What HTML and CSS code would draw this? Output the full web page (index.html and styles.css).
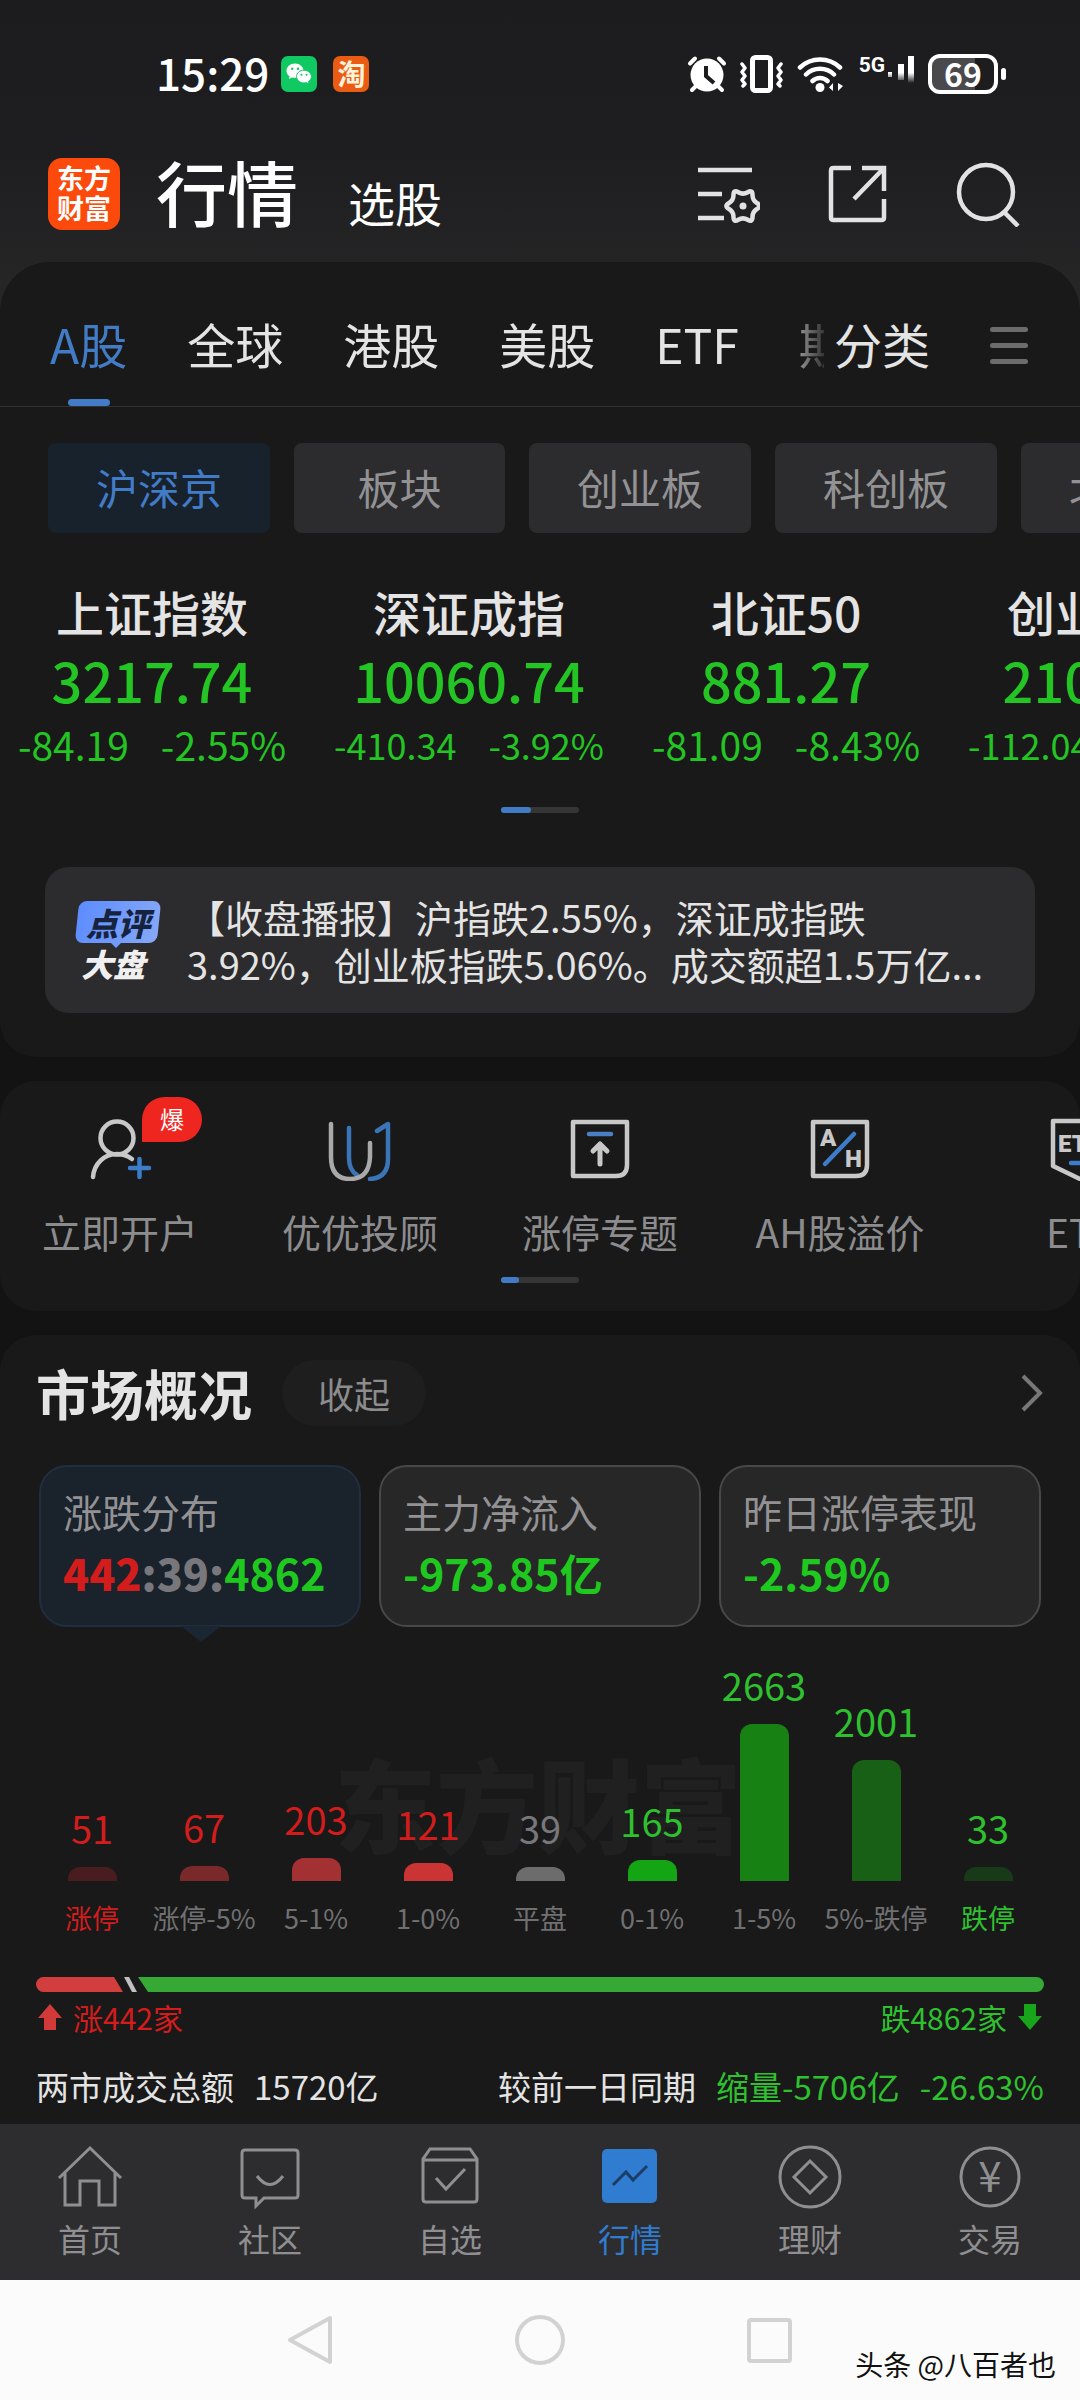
FILE: index.html
```
<!DOCTYPE html>
<html lang="zh-CN">
<head>
  <meta charset="UTF-8" />
  <meta name="viewport" content="width=device-width, initial-scale=1.0" />
  <title>行情</title>
  <link rel="stylesheet" href="styles.css">
</head>
<body>

<div class="top">
  <div class="status">
    <span class="time">15:29</span>
    <svg class="app-icon" width="36" height="36" viewBox="0 0 36 36">
      <rect width="36" height="36" rx="7" fill="#10c963"/>
      <path d="M14 7.500C9.300 7.500 5.500 10.700 5.500 14.700c0 2.300 1.200 4.200 3.100 5.500l-.8 2.900 3.200-1.700c1 .3 2 .4 3 .4 4.700 0 8.500-3.200 8.500-7.100S18.700 7.500 14 7.500z" fill="#fff"/>
      <path d="M23 14.200c-4.200 0-7.500 2.900-7.500 6.400s3.300 6.400 7.500 6.400c.9 0 1.700-.1 2.500-.4l2.700 1.500-.7-2.500c1.800-1.200 2.900-3 2.900-5 0-3.500-3.200-6.400-7.400-6.400z" fill="#fff" stroke="#10c963"/>
      <g fill="#10c963"><circle cx="11.200" cy="12.700" r="1.200"/><circle cx="17" cy="12.700" r="1.200"/><circle cx="20.500" cy="18.800" r="1"/><circle cx="25.500" cy="18.800" r="1"/></g>
    </svg>
    <span class="taobao">淘</span>
    <svg class="push" width="40" height="38" viewBox="0 0 40 38">
      <g stroke="#fff" stroke-width="4" stroke-linecap="round" fill="none"><path d="M3 8.500 8 3.500M37 8.500l-5-5M9 31l-4 4M31 31l4 4"/></g>
      <circle cx="20" cy="20" r="16.500" fill="#fff"/>
      <path d="M19 11v10l8 7" fill="none" stroke="#1d1d1f" stroke-width="4"/>
    </svg>
    <svg width="46" height="38" viewBox="0 0 46 38" fill="none" stroke="#fff" stroke-linejoin="round" stroke-linecap="round">
      <rect x="13.500" y="2.500" width="18" height="33" rx="3" stroke-width="5"/>
      <path d="m3 9 3 4-3 4 3 4-3 4 3 4-2 2M42 9l-3 4 3 4-3 4 3 4-3 4 2 2" stroke-width="3.500"/>
    </svg>
    <svg width="48" height="38" viewBox="0 0 48 38" fill="none" stroke="#fff" stroke-width="4.500" stroke-linecap="round">
      <path d="M3 12.500a29 29 0 0 1 40 0M9 19.500a20 20 0 0 1 28 0M15.500 26a11 11 0 0 1 15 0"/>
      <circle cx="23" cy="32.500" r="4.500" fill="#fff" stroke="none"/>
      <path d="M36 28v8l-4-3.500zM41 28v8l5-5z" fill="#fff" stroke="none"/>
    </svg>
    <span class="net">
      <b>5G</b>
      <svg width="27" height="30" viewBox="0 0 27 30">
        <defs><linearGradient id="fade" x1="0" y1="0" x2="0" y2="1"><stop offset=".62" stop-color="#fff"/><stop offset="1" stop-color="#fff" stop-opacity="0"/></linearGradient></defs>
        <path d="M1 17h4v5H1zM11 9h6v16h-6zM21 1h6v27h-6z" fill="url(#fade)"/>
      </svg>
    </span>
    <span class="battery">69</span>
  </div>

  <header class="header">
    <a class="logo" href="#">东方<br>财富</a>
    <h1>行情</h1>
    <a class="pick" href="#">选股</a>
    <button class="tool first" aria-label="设置">
      <svg width="62" height="62" viewBox="0 0 62 62" fill="none" stroke="#e2e2e4" stroke-width="4.500">
        <path d="M0 7h54M0 31h24M0 55h26"/>
        <path d="M59.250 45.750Q64 43 59.250 40.250 54.500 37.500 54.500 32 54.500 26.500 49.750 29.250 45 32 40.250 29.250 35.500 26.500 35.500 32 35.500 37.500 30.750 40.250 26 43 30.750 45.750 35.500 48.500 35.500 54 35.500 59.500 40.250 56.750 45 54 49.750 56.750 54.500 59.500 54.500 54 54.500 48.500 59.250 45.750z"/>
        <circle cx="45" cy="43" r="3.500" fill="#e2e2e4" stroke="none"/>
      </svg>
    </button>
    <button class="tool" aria-label="分享">
      <svg width="60" height="62" viewBox="0 0 60 62" fill="none" stroke="#e2e2e4" stroke-width="4.500">
        <path d="M23 5H5.500q-2.500 0-2.500 2.500v47q0 2.500 2.500 2.500h48q2.500 0 2.500-2.500V36M34 5h22v23M56 5 26 36"/>
      </svg>
    </button>
    <button class="tool" aria-label="搜索">
      <svg width="64" height="66" viewBox="0 0 64 66" fill="none" stroke="#e2e2e4" stroke-width="4.500">
        <circle cx="30" cy="31" r="27"/><path d="m48 51 14 14"/>
      </svg>
    </button>
  </header>
</div>

<main>
  <section class="panel market">
    <nav class="tabs">
      <div class="tab-list">
        <a class="active" href="#">A股</a>
        <a href="#">全球</a>
        <a href="#">港股</a>
        <a href="#">美股</a>
        <a href="#">ETF</a>
        <a href="#">期货</a>
      </div>
      <a class="sort" href="#">分类</a>
      <button class="menu" aria-label="菜单"><i></i><i></i><i></i></button>
    </nav>

    <div class="chips">
      <button class="active">沪深京</button>
      <button class="short">板块</button>
      <button>创业板</button>
      <button>科创板</button>
      <button>北交所</button>
    </div>

    <div class="indices">
      <div class="index"><h2>上证指数</h2><strong>3217.74</strong><p><span>-84.19</span><span>-2.55%</span></p></div>
      <div class="index"><h2>深证成指</h2><strong>10060.74</strong><p class="small"><span>-410.34</span><span>-3.92%</span></p></div>
      <div class="index"><h2>北证50</h2><strong>881.27</strong><p><span>-81.09</span><span>-8.43%</span></p></div>
      <div class="index"><h2>创业板指</h2><strong>2104.09</strong><p class="small"><span>-112.04</span><span>-5.06%</span></p></div>
    </div>
    <div class="pager"><i></i></div>

    <a class="news" href="#">
      <span class="news-tag"><b>点评</b><em>大盘</em></span>
      <span class="news-text">【收盘播报】沪指跌2.55%，深证成指跌3.92%，创业板指跌5.06%。成交额超1.5万亿...</span>
    </a>
  </section>

  <section class="panel tools">
    <div class="shortcuts">
      <a href="#">
        <svg width="64" height="64" viewBox="0 0 64 64" fill="none" stroke="#c8c8c8" stroke-width="4.500" stroke-linecap="round">
          <circle cx="29" cy="21" r="16.500"/><path d="M5 60c1-13 11-23 24-23 6 0 11 2 15 5"/><path d="M42 51h19M51.500 42v18" stroke="#3d7cc9"/>
        </svg>
        <span>立即开户</span>
        <b class="hot">爆</b>
      </a>
      <a href="#">
        <svg width="64" height="64" viewBox="0 0 64 64" fill="none" stroke-width="4.500" stroke-linecap="round" stroke-linejoin="round">
          <path d="M21 11v30q0 12 8 17" stroke="#3a75b8"/><path d="M3 7v33q0 22 19 22t20-22V26" stroke="#a9a9a9"/><path d="m49 14 11-7v35q0 19-18 20" stroke="#3a75b8"/>
        </svg>
        <span>优优投顾</span>
      </a>
      <a href="#">
        <svg width="64" height="64" viewBox="0 0 64 64" fill="none" stroke="#c8c8c8" stroke-width="4.500" stroke-linecap="round" stroke-linejoin="round">
          <path d="M5 5h54v43q0 11-11 11H5z"/><path d="M21 17h22" stroke="#4a7fc6"/><path d="M32 47V27M25 34l7-7 7 7" stroke-width="5"/>
        </svg>
        <span>涨停专题</span>
      </a>
      <a href="#">
        <svg width="64" height="64" viewBox="0 0 64 64" fill="none" stroke="#c8c8c8" stroke-width="4.500" stroke-linecap="round" stroke-linejoin="round">
          <path d="M5 5h54v43q0 11-11 11H5z"/><path d="M17 47 46 17" stroke="#3d7cc9"/>
          <text x="12" y="29" class="icon-text">A</text><text x="37" y="50" class="icon-text">H</text>
        </svg>
        <span>AH股溢价</span>
      </a>
      <a href="#">
        <svg width="64" height="64" viewBox="0 0 64 64" fill="none" stroke="#c8c8c8" stroke-width="4.500" stroke-linecap="round" stroke-linejoin="round">
          <path d="M5 4h54v45L32 62 5 49z"/><path d="M23 46h18" stroke="#3d7cc9"/>
          <text x="10" y="35" class="icon-text">ETF</text>
        </svg>
        <span>ETF</span>
      </a>
    </div>
    <div class="pager narrow"><i></i></div>
  </section>

  <section class="panel overview">
    <div class="overview-head">
      <h2>市场概况</h2>
      <button>收起</button>
      <a href="#" aria-label="更多"><svg width="24" height="38" viewBox="0 0 24 38" fill="none" stroke="#77777a" stroke-width="4"><path d="m3 2 17 17L3 36"/></svg></a>
    </div>

    <div class="cards">
      <button class="card active"><span>涨跌分布</span><strong><b class="up">442</b><b class="flat">:39:</b>4862</strong></button>
      <button class="card"><span>主力净流入</span><strong>-973.85亿</strong></button>
      <button class="card"><span>昨日涨停表现</span><strong>-2.59%</strong></button>
    </div>

    <div class="chart">
      <div class="watermark">东方财富</div>
      <div class="col up"><b>51</b><i style="height:14px;background:#491d20"></i><span>涨停</span></div>
      <div class="col up"><b>67</b><i style="height:15px;background:#79292a"></i><span class="plain">涨停-5%</span></div>
      <div class="col up"><b>203</b><i style="height:23px;background:#a33033"></i><span class="plain">5-1%</span></div>
      <div class="col up"><b>121</b><i style="height:18px;background:#cb3434"></i><span class="plain">1-0%</span></div>
      <div class="col flat"><b>39</b><i style="height:14px;background:#6c6c6c"></i><span class="plain">平盘</span></div>
      <div class="col down"><b>165</b><i style="height:21px;background:#13a513"></i><span class="plain">0-1%</span></div>
      <div class="col down"><b>2663</b><i style="height:157px;background:#178213"></i><span class="plain">1-5%</span></div>
      <div class="col down"><b>2001</b><i style="height:121px;background:#186015"></i><span class="plain">5%-跌停</span></div>
      <div class="col down"><b>33</b><i style="height:14px;background:#193a19"></i><span>跌停</span></div>
    </div>

    <div class="ratio"><i class="rise"></i><i class="even"></i><i class="fall"></i></div>
    <div class="counts">
      <span class="up"><svg width="26" height="28" viewBox="0 0 26 28"><path d="m13 1 12 14h-6v12H7V15H1z" fill="#d23a3a"/></svg>涨442家</span>
      <span class="down">跌4862家<svg width="26" height="28" viewBox="0 0 26 28"><path d="M13 27 1 13h6V1h12v12h6z" fill="#18a51c"/></svg></span>
    </div>
    <div class="turnover">
      <span>两市成交总额</span><span>15720亿</span>
      <span class="compare">较前一日同期</span><span class="down">缩量-5706亿</span><span class="down">-26.63%</span>
    </div>
  </section>
</main>

<nav class="tabbar">
  <a href="#"><svg width="66" height="66" viewBox="0 0 66 66"><path d="M2 34 33 4l31 30M8 29v32h15V37h19v24h16V29"/></svg>首页</a>
  <a href="#"><svg width="66" height="66" viewBox="0 0 66 66"><path d="M8 6h50q3 0 3 3v42q0 3-3 3H27l-8 8v-8H8q-3 0-3-3V9q0-3 3-3zM20 32q13 17 26 0"/></svg>社区</a>
  <a href="#"><svg width="66" height="66" viewBox="0 0 66 66"><path d="M13 5h40l7 10v40q0 3-3 3H9q-3 0-3-3V15zM6 16h54M19 34l10 11 19-20"/></svg>自选</a>
  <a class="active" href="#"><svg width="66" height="66" viewBox="0 0 66 66"><rect x="5" y="5" width="55" height="54" rx="5" fill="#2f7cd0" stroke="none"/><path d="m16 41 13-13 7 8 14-14" stroke="#1c3d66"/></svg>行情</a>
  <a href="#"><svg width="66" height="66" viewBox="0 0 66 66"><circle cx="33" cy="33" r="30"/><path d="m33 17 16 16-16 16-16-16z"/></svg>理财</a>
  <a href="#"><svg width="66" height="66" viewBox="0 0 66 66"><circle cx="33" cy="33" r="29"/><text x="33" y="48" class="yen">¥</text></svg>交易</a>
</nav>

<footer class="sysnav">
  <button aria-label="返回"><svg width="52" height="52" viewBox="0 0 52 52"><path d="M45 4v44L5 26z"/></svg></button>
  <button aria-label="主页"><svg width="52" height="52" viewBox="0 0 52 52"><circle cx="26" cy="26" r="23"/></svg></button>
  <button aria-label="最近任务"><svg width="52" height="52" viewBox="0 0 52 52"><rect x="6" y="6" width="41" height="41" rx="2"/></svg></button>
  <span class="credit">头条 @八百者也</span>
</footer>

</body>
</html>
```
FILE: styles.css
```
* {
  box-sizing: border-box;
}
body {
  margin: 0;
  min-height: 100vh;
  display: flex;
  flex-direction: column;
  overflow-x: hidden;
  background: #131313;
  color: #e4e4e4;
  font-family: "Noto Sans CJK SC", sans-serif;
}
h1, h2, p {
  margin: 0;
}
a {
  color: inherit;
  text-decoration: none;
}
button {
  border: 0;
  padding: 0;
  background: none;
  color: inherit;
  font: inherit;
}
svg {
  display: block;
  flex: none;
}
.up { color: #d31c1c; }
.down { color: #2fc02f; }
.flat { color: #77777c; }

/* status bar and title */
.top {
  background: linear-gradient(#1c1c1e 0, #1e1e20 50%, #272728 100%);
  margin-bottom: -50px;
  padding-bottom: 50px;
}
.status {
  display: flex;
  align-items: center;
  height: 148px;
  padding: 0 82px 0 156px;
  color: #fff;
}
.time {
  padding-bottom: 4px;
  font-size: 44px;
  font-weight: 500;
  line-height: 60px;
  margin-right: 12px;
}
.taobao {
  width: 36px;
  height: 36px;
  margin-left: 16px;
  border-radius: 7px;
  background: #ea5b13;
  color: #fff3da;
  font-size: 28px;
  font-weight: 700;
  line-height: 34px;
  text-align: center;
}
.push {
  margin-left: auto;
}
.status svg + svg {
  margin-left: 12px;
}
.net {
  display: flex;
  align-items: flex-start;
  height: 38px;
  margin: 0 14px 0 14px;
}
.net b {
  margin-right: 2px;
  font-family: Roboto, sans-serif;
  font-size: 21px;
  font-weight: 700;
  line-height: 20px;
}
.battery {
  position: relative;
  width: 70px;
  height: 40px;
  border: 4px solid #fff;
  border-radius: 12px;
  background: linear-gradient(90deg, #4a4a4c 69%, #1d1d1f 69%);
  font-size: 32px;
  font-weight: 700;
  line-height: 30px;
  text-align: center;
}
.battery::after {
  content: "";
  position: absolute;
  left: 69px;
  top: 10px;
  width: 5px;
  height: 12px;
  border-radius: 3px;
  background: #fff;
}
.header {
  display: flex;
  align-items: center;
  height: 92px;
  margin-bottom: 22px;
  padding: 0 60px 0 48px;
}
.logo {
  width: 72px;
  height: 72px;
  padding-top: 5px;
  border-radius: 14px;
  background: #fb4a0c;
  color: #fff;
  font-size: 27px;
  font-weight: 700;
  line-height: 30px;
  text-align: center;
}
.header h1 {
  margin: 0 50px 0 36px;
  padding-bottom: 8px;
  color: #fff;
  font-size: 71px;
  font-weight: 500;
  line-height: 80px;
}
.pick {
  padding-top: 16px;
  color: #fff;
  font-size: 47px;
  line-height: 60px;
}
.tool {
  margin-left: 68px;
}
.tool.first {
  margin-left: auto;
}

main {
  display: flex;
  flex-direction: column;
  gap: 24px;
  flex: 1;
}
.panel {
  background: #191919;
  border-radius: 36px;
  overflow: hidden;
}
.market {
  padding-bottom: 44px;
  border-radius: 50px 50px 36px 36px;
}

/* market tabs */
.tabs {
  display: flex;
  height: 145px;
  padding: 18px 52px 0 50px;
  border-bottom: 1px solid #303030;
  font-size: 48px;
  line-height: 126px;
}
.tab-list {
  flex: 1;
  display: flex;
  gap: 60px;
  overflow: hidden;
  white-space: nowrap;
  -webkit-mask-image: linear-gradient(90deg, #000 94%, transparent 101%);
  mask-image: linear-gradient(90deg, #000 94%, transparent 101%);
}
.tabs .active {
  position: relative;
  color: #427cc7;
}
.tabs .active::after {
  content: "";
  position: absolute;
  left: 50%;
  bottom: 0;
  width: 42px;
  height: 7px;
  margin-left: -21px;
  border-radius: 4px;
  background: #427cc7;
}
.sort {
  margin: 0 60px 0 10px;
}
.menu {
  display: flex;
  flex-direction: column;
  justify-content: center;
  gap: 11px;
  width: 38px;
  padding-top: 4px;
}
.menu i {
  height: 5px;
  border-radius: 3px;
  background: #6c6c6c;
}
.chips {
  display: flex;
  gap: 24px;
  padding: 36px 0 0 48px;
}
.chips button {
  flex: none;
  width: 222px;
  height: 90px;
  padding-bottom: 4px;
  border-radius: 8px;
  background: #2c2c2e;
  color: #929294;
  font-size: 42px;
}
.chips .short {
  width: 211px;
}
.chips .active {
  background: #18222c;
  color: #427cc7;
}

/* index quotes */
.indices {
  display: flex;
  gap: 13px;
  margin-top: 48px;
}
.index {
  flex: none;
  width: 304px;
  color: #23c423;
  text-align: center;
  white-space: nowrap;
}
.index h2 {
  color: #e4e4e4;
  font-size: 48px;
  font-weight: 500;
  line-height: 60px;
}
.index strong {
  display: block;
  font-size: 54px;
  font-weight: 500;
  line-height: 78px;
}
.index p {
  display: flex;
  justify-content: center;
  gap: 32px;
  font-size: 39px;
  line-height: 50px;
}
.index .small {
  font-size: 36px;
}
.pager {
  width: 78px;
  height: 6px;
  margin: 38px auto 0;
  border-radius: 3px;
  background: #353535;
}
.pager i {
  display: block;
  width: 30px;
  height: 6px;
  border-radius: 3px;
  background: #427cc7;
}
.pager.narrow {
  margin-top: 16px;
}
.narrow i {
  width: 18px;
}
.news {
  display: flex;
  align-items: flex-start;
  gap: 22px;
  margin: 54px 45px 0;
  padding: 26px 30px;
  border-radius: 24px;
  background: #2c2c2e;
}
.news-tag {
  width: 90px;
  padding: 8px 6px 0 2px;
  font-size: 32px;
  font-style: italic;
  text-align: center;
}
.news-tag b {
  position: relative;
  z-index: 0;
  display: block;
  color: #16233f;
  font-weight: 900;
  line-height: 42px;
}
.news-tag b::before {
  content: "";
  position: absolute;
  z-index: -1;
  inset: 0;
  border-radius: 8px;
  background: linear-gradient(100deg, #5c8cff, #86a8f6);
  transform: skewX(-6deg);
}
.news-tag b::after {
  content: "";
  position: absolute;
  left: 34px;
  top: 42px;
  border: 5px solid transparent;
  border-top-color: #6f9aff;
  border-bottom: 0;
}
.news-tag em {
  display: block;
  padding-right: 10px;
  color: #f0f0f0;
  font-weight: 900;
  line-height: 40px;
}
.news-text {
  flex: 1;
  font-size: 38px;
  line-height: 47px;
}

/* shortcuts */
.tools {
  padding: 36px 0 28px;
}
.shortcuts {
  display: flex;
}
.shortcuts a {
  position: relative;
  flex: none;
  width: 240px;
  display: flex;
  flex-direction: column;
  align-items: center;
  gap: 20px;
  color: #8c8c8e;
  font-size: 39px;
  line-height: 60px;
  white-space: nowrap;
}
.hot {
  position: absolute;
  left: 142px;
  top: -20px;
  width: 60px;
  height: 45px;
  border-radius: 23px 23px 23px 0;
  background: #ef2620;
  color: #fff;
  font-size: 24px;
  font-weight: 400;
  line-height: 44px;
  text-align: center;
}
.icon-text {
  fill: #c8c8c8;
  stroke: none;
  font-family: Roboto, sans-serif;
  font-size: 24px;
  font-weight: 900;
}

/* overview */
.overview {
  flex: 1;
  padding: 25px 36px 14px;
  border-radius: 36px 36px 0 0;
}
.overview-head {
  display: flex;
  align-items: center;
  height: 66px;
}
.overview-head h2 {
  font-size: 54px;
  font-weight: 700;
  line-height: 66px;
}
.overview-head button {
  width: 144px;
  height: 66px;
  margin-left: 30px;
  border-radius: 33px;
  background: #1e1e1e;
  color: #8c8c8e;
  font-size: 36px;
  line-height: 60px;
}
.overview-head a {
  margin-left: auto;
}
.cards {
  display: grid;
  grid-template-columns: repeat(3, 1fr);
  gap: 18px;
  margin: 39px 3px 0;
}
.card {
  position: relative;
  height: 162px;
  padding: 0 0 4px 22px;
  border: 2px solid #48484a;
  border-radius: 28px;
  background: #272727;
  text-align: left;
}
.card span {
  display: block;
  color: #929294;
  font-size: 39px;
  line-height: 56px;
}
.card strong {
  display: block;
  color: #1fc81f;
  font-size: 43px;
  font-weight: 700;
  line-height: 66px;
}
.card.active {
  border-color: #202f40;
  background: #1a222c;
}
.card.active::after {
  content: "";
  position: absolute;
  left: 140px;
  bottom: -17px;
  border: 20px solid transparent;
  border-width: 16px 20px 0;
  border-top-color: #1a2632;
}
.chart {
  position: relative;
  display: flex;
  align-items: flex-end;
  margin-top: 25px;
  height: 287px;
}
.watermark {
  position: absolute;
  left: 298px;
  top: 90px;
  color: #202020;
  font-size: 102px;
  font-weight: 900;
  line-height: 120px;
}
.col {
  position: relative;
  flex: 1;
  display: flex;
  flex-direction: column;
  align-items: center;
  white-space: nowrap;
}
.col b {
  font-size: 38px;
  font-weight: 400;
  line-height: 48px;
  margin-bottom: 15px;
}
.col i {
  width: 49px;
  border-radius: 12px 12px 0 0;
}
.col span {
  margin-top: 16px;
  font-size: 27px;
  line-height: 42px;
}
.col .plain {
  color: #707072;
}

/* rise and fall ratio */
.ratio {
  display: flex;
  height: 15px;
  margin-top: 38px;
}
.rise {
  width: 87px;
  border-radius: 8px 0 0 8px;
  background: #d23e3e;
  clip-path: polygon(0 0, 78px 0, 100% 100%, 0 100%);
}
.even {
  width: 15px;
  background: #c0c0c0;
  clip-path: polygon(1px 0, 6px 0, 14px 100%, 9px 100%);
}
.fall {
  flex: 1;
  border-radius: 0 8px 8px 0;
  background: #35a835;
  clip-path: polygon(0 0, 100% 0, 100% 100%, 10px 100%);
}
.counts {
  display: flex;
  justify-content: space-between;
  padding: 4px 1px 0;
  font-size: 30px;
  line-height: 42px;
}
.counts span {
  display: flex;
  align-items: center;
  gap: 10px;
}
.turnover {
  display: flex;
  gap: 20px;
  margin-top: 24px;
  font-size: 33px;
  line-height: 48px;
  white-space: nowrap;
}
.compare {
  margin-left: auto;
}

/* bottom navigation */
.tabbar {
  display: flex;
  height: 156px;
  padding-top: 20px;
  background: #2d2d2f;
}
.tabbar a {
  flex: 1;
  display: flex;
  flex-direction: column;
  align-items: center;
  color: #8f8f91;
  font-size: 32px;
  line-height: 56px;
}
.tabbar svg {
  fill: none;
  stroke: #8f8f91;
  stroke-width: 3;
}
.tabbar .active {
  color: #2f7cd0;
}
.tabbar .yen {
  fill: #8f8f91;
  stroke: none;
  font-size: 42px;
  text-anchor: middle;
}
.sysnav {
  position: relative;
  display: flex;
  justify-content: center;
  align-items: center;
  gap: 177px;
  height: 120px;
  background: #fbfbfb;
}
.sysnav svg {
  fill: none;
  stroke: #d2d2d2;
  stroke-width: 4;
  stroke-linejoin: round;
}
.credit {
  position: absolute;
  right: 24px;
  bottom: 16px;
  color: #111;
  font-size: 28px;
  line-height: 40px;
  text-shadow: 1px 1px 2px #fff;
}
```
